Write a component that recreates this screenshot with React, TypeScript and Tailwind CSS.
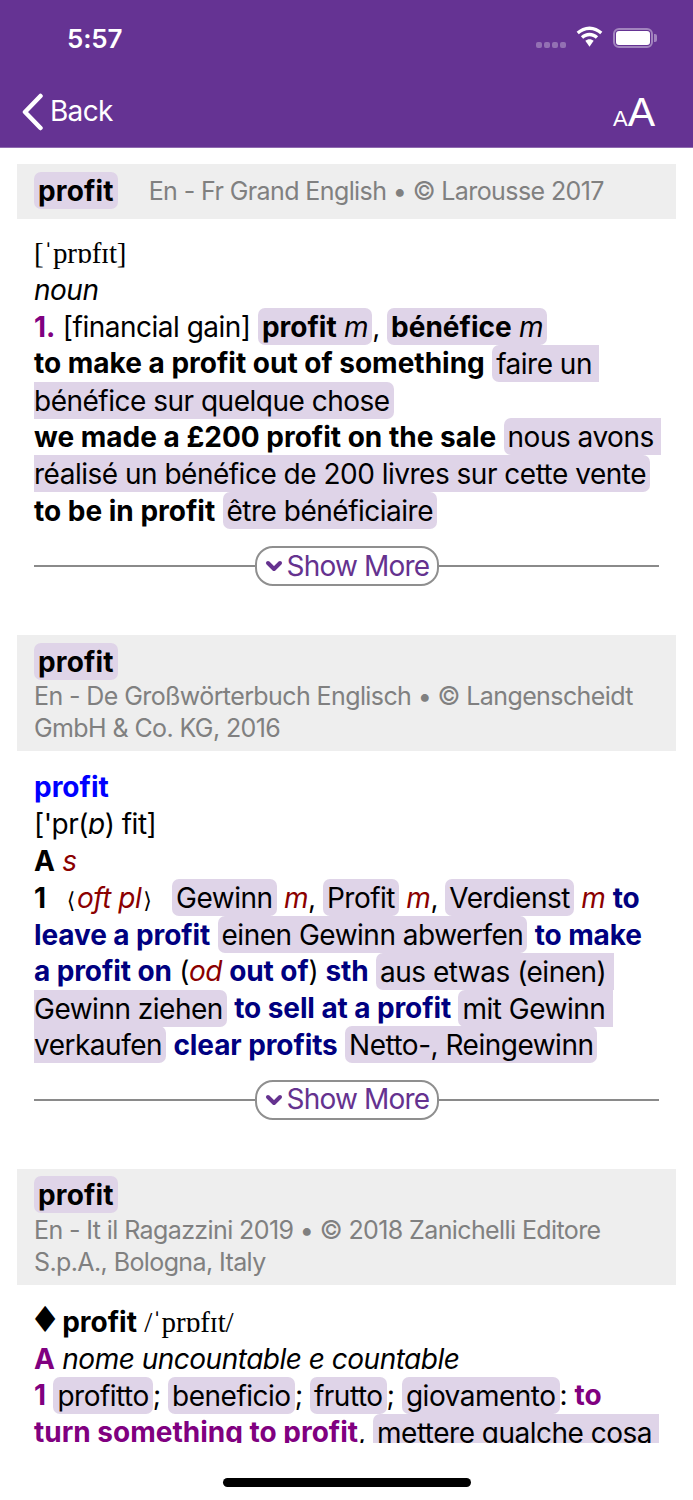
import { ChevronDown } from "lucide-react";
import type { ReactNode } from "react";

function Hl({ children }: { children: ReactNode }) {
  return <span className="bg-[#dfd4e8] rounded-[7px] px-[4px] py-[1.5px] whitespace-pre-wrap">{children}</span>;
}

function Phon({ children }: { children: ReactNode }) {
  return <span className="font-['Liberation_Serif',serif] text-[29px] leading-none tracking-[-0.2px]">{children}</span>;
}

function Red({ children }: { children: ReactNode }) {
  return <i className="text-[#8b0000]">{children}</i>;
}

function B({ children }: { children: ReactNode }) {
  return <b className="font-bold tracking-normal">{children}</b>;
}

function Navy({ children }: { children: ReactNode }) {
  return <b className="font-bold tracking-[-0.1px] text-[#000080]">{children}</b>;
}

function Pur({ children }: { children: ReactNode }) {
  return <b className="font-bold tracking-normal text-[#800080]">{children}</b>;
}

function DictHeader({ source, inline }: { source: ReactNode; inline?: boolean }) {
  return (
    <div className={inline ? "bg-[#eeeeee] px-[17px] pt-[8px] pb-[9px] mx-[17px]" : "bg-[#eeeeee] px-[17px] pt-[8px] pb-[7px] mx-[17px]"}>
      <div className="text-[28px] leading-[37px] text-black">
        <span className="bg-[#dfd4e8] rounded-[7px] px-[4px] py-[1.5px] font-bold tracking-[0.15px]">profit</span>
        {inline && (
          <span className="ml-[31px] text-[25px] text-[#808080] font-normal tracking-[-0.6px]">{source}</span>
        )}
      </div>
      {!inline && <div className="text-[25px] leading-[32px] text-[#808080] tracking-[-0.6px]">{source}</div>}
    </div>
  );
}

function ShowMore() {
  return (
    <div className="flex items-center mx-[34px] mt-[16px]">
      <div className="flex-1 h-[2px] bg-[#8a8a8a]" />
      <div className="flex items-center w-[184px] h-[40px] pl-[5px] bg-white border-2 border-[#8f8f8f] rounded-[18px] text-[#65328f] text-[28px] tracking-[-0.8px]">
        <ChevronDown size={24} strokeWidth={4} className="mr-[1px] shrink-0" />
        <span>Show More</span>
      </div>
      <div className="flex-1 h-[2px] bg-[#8a8a8a]" />
    </div>
  );
}

export default function App() {
  return (
    <div className="w-[693px] h-[1500px] flex flex-col bg-white overflow-hidden font-['Inter',sans-serif] text-black">
      {/* nav */}
      <div className="h-[148px] shrink-0 bg-[#653393] border-b border-[#8f6bb0] text-white flex flex-col">
        <div className="h-[76px] flex items-center justify-between pl-[67px] pr-[40px]">
          <span className="text-[26px] font-semibold tracking-[-0.2px]">5:57</span>
          <div className="flex items-center">
            <div className="flex gap-[2px] mt-[14px] mr-[8px]">
              <span className="w-[6px] h-[6px] rounded-[2px] bg-white/30" />
              <span className="w-[6px] h-[6px] rounded-[2px] bg-white/30" />
              <span className="w-[6px] h-[6px] rounded-[2px] bg-white/30" />
              <span className="w-[6px] h-[6px] rounded-[2px] bg-white/30" />
            </div>
            <svg width="31" height="24" viewBox="0 0 28 22" fill="white" className="mr-[8px] mb-[2px]">
              <path d="M14 4.5c3.8 0 7.2 1.5 9.8 3.9l2-2.1C22.600 3.300 18.500 1.400 14 1.400S5.400 3.300 2.200 6.300l2 2.100C6.800 6 10.200 4.500 14 4.500z" />
              <path d="M14 10.200c2.200 0 4.300.9 5.800 2.300l2.100-2.100C19.800 8.400 17 7.200 14 7.200s-5.800 1.200-7.900 3.200l2.100 2.100c1.500-1.400 3.600-2.300 5.800-2.300z" />
              <path d="M14 13c-1.500 0-2.800.6-3.800 1.500L14 20l3.800-5.500C16.800 13.600 15.500 13 14 13z" />
            </svg>
            <div className="w-[40px] h-[20px] border-2 border-white/40 rounded-[6px] p-[1px] relative">
              <div className="w-full h-full bg-white rounded-[3px]" />
              <span className="absolute right-[-6px] top-[4px] w-[3px] h-[8px] bg-white/40 rounded-r-[2px]" />
            </div>
          </div>
        </div>
        <div className="flex-1 flex items-start justify-between pl-[21px] pr-[38px]">
          <div className="flex items-center mt-[15px]">
            <svg width="24" height="38" viewBox="0 0 24 38" fill="none" stroke="white" strokeWidth="4.500" strokeLinecap="round" strokeLinejoin="round">
              <path d="M19.500 3 L4 19 L19.500 35" />
            </svg>
            <span className="ml-[5px] text-[28px] tracking-[-0.7px] -translate-y-[1px]">Back</span>
          </div>
          <div className="flex items-baseline mt-[11px] font-['Liberation_Sans',sans-serif] font-normal">
            <span className="text-[22px] leading-none">A</span>
            <span className="text-[41px] leading-[50px]">A</span>
          </div>
        </div>
      </div>

      {/* dictionary content */}
      <div className="flex-1 min-h-0 overflow-hidden pt-[16px] text-[28px] leading-[36.800px] tracking-[-0.5px]">
        <DictHeader inline source="En - Fr Grand English • © Larousse 2017" />
        <div className="px-[34px] mt-[16px] pb-[1px]">
          <div><Phon>[ˈprɒfɪt]</Phon></div>
          <div><i>noun</i></div>
          <div>
            <Pur>1.</Pur> [financial gain] <Hl><B>profit</B> <i>m</i></Hl>, <Hl><B>bénéfice</B> <i>m</i></Hl>
            <br />
            <B>to make a profit out of something</B> <Hl>faire un bénéfice sur quelque chose</Hl>
            <br />
            <B>we made a £200 profit on the sale</B> <Hl>nous avons réalisé un bénéfice de 200 livres sur cette vente</Hl>
            <br />
            <B>to be in profit</B> <Hl>être bénéficiaire</Hl>
          </div>
        </div>
        <ShowMore />

        <div className="h-[49px]" />
        <DictHeader source="En - De Großwörterbuch Englisch • © Langenscheidt GmbH & Co. KG, 2016" />
        <div className="px-[34px] mt-[18px]">
          <div><b className="font-bold tracking-normal text-[#0000ff]">profit</b></div>
          <div>['pr(<i>ɒ</i>) fit]</div>
          <div><B>A</B> <Red>s</Red></div>
          <div>
            <B>1</B>&nbsp; <span className="font-['DejaVu_Sans',sans-serif] text-[22px] leading-none ml-[6px] mr-[2px]">⟨</span><Red>oft pl</Red><span className="font-['DejaVu_Sans',sans-serif] text-[22px] leading-none ml-[2px] mr-[6px]">⟩</span>&nbsp; <Hl>Gewinn</Hl> <Red>m</Red>, <Hl>Profit</Hl> <Red>m</Red>, <Hl>Verdienst</Hl> <Red>m</Red> <Navy>to leave a profit</Navy> <Hl>einen Gewinn abwerfen</Hl> <Navy>to make a profit on</Navy> (<Red>od</Red> <Navy>out of</Navy>) <Navy>sth</Navy> <Hl>aus etwas (einen) Gewinn ziehen</Hl> <Navy>to sell at a profit</Navy> <Hl>mit Gewinn verkaufen</Hl> <Navy>clear profits</Navy> <Hl>Netto-, Reingewinn</Hl>
          </div>
        </div>
        <ShowMore />

        <div className="h-[49px]" />
        <DictHeader source="En - It il Ragazzini 2019 • © 2018 Zanichelli Editore S.p.A., Bologna, Italy" />
        <div className="px-[34px] mt-[17px]">
          <div><span className="font-['DejaVu_Sans',sans-serif] text-[36px] leading-none -ml-[5px] mr-[-6px]">♦</span> <B>profit</B> <Phon>/ˈprɒfɪt/</Phon></div>
          <div><Pur>A</Pur> <i>nome uncountable e countable</i></div>
          <div>
            <Pur>1</Pur> <Hl>profitto</Hl>; <Hl>beneficio</Hl>; <Hl>frutto</Hl>; <Hl>giovamento</Hl>: <Pur>to turn something to profit</Pur>, <Hl>mettere qualche cosa a profitto</Hl>
          </div>
        </div>
      </div>

      {/* home indicator */}
      <div className="h-[57px] shrink-0 flex justify-center pt-[35px]">
        <div className="w-[248px] h-[9px] rounded-full bg-black" />
      </div>
    </div>
  );
}
